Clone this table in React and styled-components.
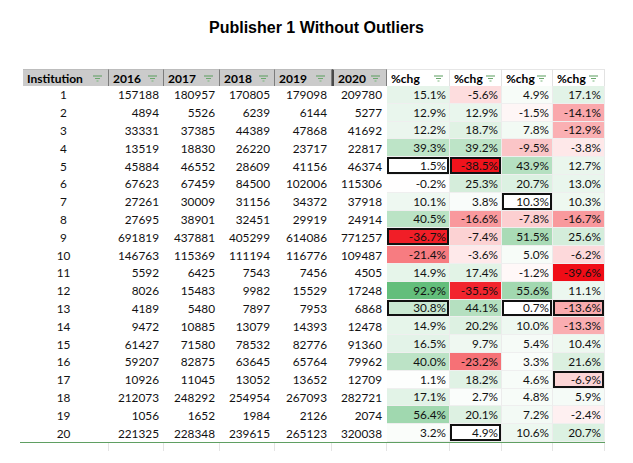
import React from "react";
import styled, { createGlobalStyle } from "styled-components";

const GlobalStyle = createGlobalStyle`
  body {
    margin: 0;
    background: #fff;
    font-family: "Lato", "Liberation Sans", sans-serif;
    color: #111;
  }
`;

const COLS = "86px 55px 56px 55px 57px 55px 63px 52px 51px 52px";
const MIN = -39.6;
const MAX = 92.9;

// 3 colour scale, red -> white (0) -> green
const scaleColor = (v) => {
  const mix = (a, b, t) => Math.round(a + (b - a) * t);
  if (v >= 0) {
    const t = Math.min(v / MAX, 1);
    return `rgb(${mix(255, 99, t)}, ${mix(255, 190, t)}, ${mix(255, 123, t)})`;
  }
  const t = Math.min(v / MIN, 1);
  return `rgb(${mix(255, 240, t)}, ${mix(255, 12, t)}, ${mix(255, 22, t)})`;
};

// * marks a boxed cell, ! a boxed cell left white
const rows = [
  [1, 157188, 180957, 170805, 179098, 209780, "15.1", "-5.6", "4.9", "17.1"],
  [2, 4894, 5526, 6239, 6144, 5277, "12.9", "12.9", "-1.5", "-14.1"],
  [3, 33331, 37385, 44389, 47868, 41692, "12.2", "18.7", "7.8", "-12.9"],
  [4, 13519, 18830, 26220, 23717, 22817, "39.3", "39.2", "-9.5", "-3.8"],
  [5, 45884, 46552, 28609, 41156, 46374, "1.5!", "-38.5*", "43.9", "12.7"],
  [6, 67623, 67459, 84500, 102006, 115306, "-0.2", "25.3", "20.7", "13.0"],
  [7, 27261, 30009, 31156, 34372, 37918, "10.1", "3.8", "10.3!", "10.3"],
  [8, 27695, 38901, 32451, 29919, 24914, "40.5", "-16.6", "-7.8", "-16.7"],
  [9, 691819, 437881, 405299, 614086, 771257, "-36.7*", "-7.4", "51.5", "25.6"],
  [10, 146763, 115369, 111194, 116776, 109487, "-21.4", "-3.6", "5.0", "-6.2"],
  [11, 5592, 6425, 7543, 7456, 4505, "14.9", "17.4", "-1.2", "-39.6"],
  [12, 8026, 15483, 9982, 15529, 17248, "92.9", "-35.5", "55.6", "11.1"],
  [13, 4189, 5480, 7897, 7953, 6868, "30.8*", "44.1", "0.7!", "-13.6*"],
  [14, 9472, 10885, 13079, 14393, 12478, "14.9", "20.2", "10.0", "-13.3"],
  [15, 61427, 71580, 78532, 82776, 91360, "16.5", "9.7", "5.4", "10.4"],
  [16, 59207, 82875, 63645, 65764, 79962, "40.0", "-23.2", "3.3", "21.6"],
  [17, 10926, 11045, 13052, 13652, 12709, "1.1", "18.2", "4.6", "-6.9*"],
  [18, 212073, 248292, 254954, 267093, 282721, "17.1", "2.7", "4.8", "5.9"],
  [19, 1056, 1652, 1984, 2126, 2074, "56.4", "20.1", "7.2", "-2.4"],
  [20, 221325, 228348, 239615, 265123, 320038, "3.2", "4.9!", "10.6", "20.7"],
];

const headers = ["Institution", "2016", "2017", "2018", "2019", "2020", "%chg", "%chg", "%chg", "%chg"];

const Page = styled.div`
  width: 633px;
  padding-top: 18px;
`;

const Title = styled.h1`
  margin: 0;
  text-align: center;
  font-family: "Liberation Sans", Arial, sans-serif;
  font-size: 16px;
  line-height: 20px;
  font-weight: bold;
  color: #000;
`;

const Sheet = styled.div`
  margin: 31px 0 0 23px;
  width: 582px;
`;

const Row = styled.div`
  display: grid;
  grid-template-columns: ${COLS};
  height: ${(p) => p.$h}px;
`;

const Body = styled.div`
  border-bottom: 1px solid #5f9f62;
  margin-left: -3px;
  padding-left: 3px;
`;

const HeadCell = styled.div`
  display: flex;
  align-items: center;
  justify-content: space-between;
  padding: 0 6px 0 4px;
  font-weight: 700;
  font-size: 12px;
  color: #000;
  background: ${(p) => (p.$gray ? "#cbcbcb" : "#fff")};
  border-top: 1px solid ${(p) => (p.$gray ? "#bdbdbd" : "#e6e6e6")};
  border-right: 1px solid ${(p) => (p.$gray ? "#7c7c7c" : "#e2e2e2")};
  border-left: ${(p) => (p.$sel ? "2px solid #4a4a4a" : "none")};
`;

const Filter = () => (
  <svg width="9" height="7" viewBox="0 0 9 7">
    <rect x="0" y="0.5" width="9" height="1" fill="#5b9d5f" />
    <rect x="2" y="3" width="5" height="1" fill="#6aa86d" />
    <rect x="3.5" y="5.5" width="2" height="1" fill="#7ab67d" />
  </svg>
);

const NumCell = styled.div`
  display: flex;
  align-items: center;
  justify-content: ${(p) => (p.$center ? "center" : "flex-end")};
  padding: 0 5px 0 0;
  font-size: 11.8px;
  color: #111;
`;

const PctCell = styled.div`
  display: flex;
  align-items: ${(p) => (p.$boxed ? "flex-end" : "center")};
  justify-content: flex-end;
  padding: 0 3px ${(p) => (p.$boxed ? "1px" : "0")} 0;
  font-size: 11.8px;
  color: #111;
  border-right: 1px solid #ececec;
  border-bottom: 1px solid #efefef;
  box-shadow: ${(p) => (p.$boxed ? "inset 0 0 0 2px #111" : "none")};
`;

const Tail = styled.div`
  height: 8px;
  border-right: 1px solid #e4e4e4;
`;

const Pct = ({ raw }) => {
  const boxed = raw.endsWith("*") || raw.endsWith("!");
  const text = raw.replace(/[*!]/, "");
  const bg = raw.endsWith("!") ? "#fff" : scaleColor(parseFloat(text));
  return (
    <PctCell $boxed={boxed} style={{ background: bg }}>
      {text}%
    </PctCell>
  );
};

export default function App() {
  return (
    <Page>
      <GlobalStyle />
      <Title>Publisher 1 Without Outliers</Title>
      <Sheet>
        <Row $h={17}>
          {headers.map((h, i) => (
            <HeadCell key={i} $gray={i < 6} $sel={i === 5}>
              <span>{h}</span>
              <Filter />
            </HeadCell>
          ))}
        </Row>
        <Body>
          {rows.map((r) => (
            <Row key={r[0]} $h={17.8}>
              {r.slice(0, 6).map((v, i) => (
                <NumCell key={i} $center={i === 0}>
                  {v}
                </NumCell>
              ))}
              {r.slice(6).map((v, i) => (
                <Pct key={i} raw={v} />
              ))}
            </Row>
          ))}
        </Body>
        <Row $h={8}>
          {headers.map((h, i) => (
            <Tail key={i} />
          ))}
        </Row>
      </Sheet>
    </Page>
  );
}
